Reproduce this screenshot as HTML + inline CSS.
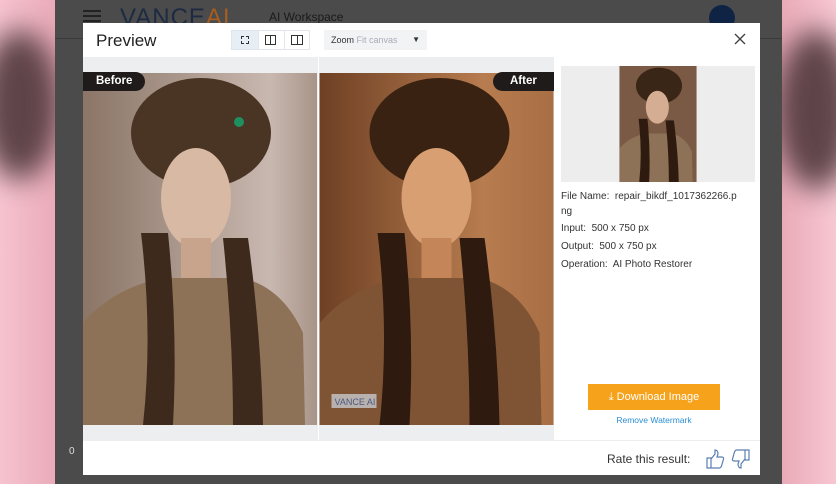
<!DOCTYPE html>
<html><head><meta charset="utf-8"><style>
*{margin:0;padding:0;box-sizing:border-box}
body{width:836px;height:484px;overflow:hidden;position:relative;font-family:"Liberation Sans",sans-serif;background:#f2b9c6}
.pinkL{position:absolute;left:0;top:0;width:60px;height:484px;background:linear-gradient(90deg,#f6c3cf,#e9a9b7)}
.pinkR{position:absolute;right:0;top:0;width:60px;height:484px;background:linear-gradient(90deg,#e8a7b5,#f7c7d2)}
.blobL{position:absolute;left:-20px;top:30px;width:80px;height:150px;border-radius:50%;background:#2e1d20;filter:blur(14px);opacity:.75}
.blobR{position:absolute;right:-20px;top:30px;width:80px;height:160px;border-radius:50%;background:#2e1d20;filter:blur(14px);opacity:.75}
.app{position:absolute;left:55px;top:0;width:727px;height:484px;background:#4b4b4b}
.modal{position:absolute;left:83px;top:23px;width:677px;height:452px;background:#fff}
.info div{position:absolute;left:0;white-space:nowrap}
</style></head><body>
<div class="pinkL"></div><div class="pinkR"></div><div class="blobL"></div><div class="blobR"></div>
<div class="app">
  <div style="position:absolute;left:28px;top:10px;width:18px;height:2px;background:#222;box-shadow:0 5px 0 #222,0 10px 0 #222"></div>
  <div style="position:absolute;left:65px;top:4px;font-size:24px;color:#1d2a44;letter-spacing:1px">VANCE<span style="color:#a55d20">AI</span></div>
  <div style="position:absolute;left:214px;top:10px;font-size:12px;color:#1a1a1a">AI Workspace</div>
  <div style="position:absolute;left:654px;top:5px;width:26px;height:26px;border-radius:50%;background:#0f2445"></div>
  <div style="position:absolute;left:0;top:38px;width:727px;height:1px;background:#3a3a3a"></div>
  <div style="position:absolute;left:14px;top:446px;font-size:10px;color:#ddd">0</div>
</div>
<div class="modal">
  <div style="position:absolute;left:13px;top:8px;font-size:17px;color:#222">Preview</div>
  <div style="position:absolute;left:148px;top:7px;width:79px;height:20px;border:1px solid #e2e6ea;background:#fff">
    <div style="position:absolute;left:0;top:0;width:26px;height:18px;background:#e6eef6"></div>
    <div style="position:absolute;left:26px;top:0;width:1px;height:18px;background:#e2e6ea"></div>
    <div style="position:absolute;left:52px;top:0;width:1px;height:18px;background:#e2e6ea"></div>
    <div style="position:absolute;left:9px;top:5px;width:8px;height:8px;border:1px dashed #333"></div>
    <div style="position:absolute;left:33px;top:4px;width:11px;height:10px;border:1px solid #333"></div>
    <div style="position:absolute;left:38px;top:4px;width:1px;height:10px;background:#333"></div>
    <div style="position:absolute;left:59px;top:4px;width:12px;height:10px;border:1px solid #333"></div>
    <div style="position:absolute;left:65px;top:4px;width:1px;height:10px;background:#333"></div>
  </div>
  <div style="position:absolute;left:241px;top:7px;width:103px;height:20px;background:#f1f3f5;font-size:9px;line-height:20px;padding-left:7px;color:#333">Zoom <span style="color:#aab">Fit canvas</span><span style="position:absolute;right:7px;top:0;font-size:8px">▼</span></div>
  <svg style="position:absolute;left:651px;top:10px" width="12" height="12" viewBox="0 0 12 12" stroke="#444" stroke-width="1.4"><path d="M1 1L11 11M11 1L1 11"/></svg>
  <div style="position:absolute;left:0;top:34px;width:471px;height:383px;background:#eceef0"></div>
  <div style="position:absolute;left:235px;top:34px;width:1px;height:383px;background:#fff"></div>
  <svg style="position:absolute;left:0;top:50px" width="234" height="352" viewBox="0 0 234 352">
    <defs><linearGradient id="bg1" x1="0" x2="1"><stop offset="0" stop-color="#8a7566"/><stop offset=".8" stop-color="#c9b8b0"/><stop offset="1" stop-color="#a89488"/></linearGradient></defs>
    <rect width="234" height="352" fill="url(#bg1)"/>
    <path d="M0 250 Q30 215 80 205 L160 205 Q200 215 220 260 L222 352 L0 352Z" fill="#8d7258"/>
    <ellipse cx="118" cy="60" rx="70" ry="55" fill="#4a3424"/>
    <ellipse cx="113" cy="125" rx="35" ry="50" fill="#d7b9a4"/>
    <rect x="98" y="165" width="30" height="40" fill="#c9a48c"/>
    <path d="M58 160 Q70 260 60 352 L90 352 Q95 260 85 160Z" fill="#3d2a1c"/>
    <path d="M140 165 Q150 260 150 352 L180 352 Q178 260 165 165Z" fill="#3d2a1c"/>
    <circle cx="156" cy="49" r="5" fill="#1e8f5e"/>
  </svg>
  <svg style="position:absolute;left:236px;top:50px" width="235" height="352" viewBox="0 0 234 352">
    <defs><linearGradient id="bg2" x1="0" x2="1"><stop offset="0" stop-color="#6e4024"/><stop offset=".7" stop-color="#b77c4f"/><stop offset="1" stop-color="#a86e44"/></linearGradient></defs>
    <rect width="234" height="352" fill="url(#bg2)"/>
    <path d="M0 250 Q30 215 80 205 L160 205 Q200 215 220 260 L222 352 L0 352Z" fill="#7e5434"/>
    <ellipse cx="120" cy="60" rx="70" ry="55" fill="#3a2212"/>
    <ellipse cx="117" cy="125" rx="35" ry="50" fill="#d89f72"/>
    <rect x="102" y="165" width="30" height="40" fill="#c48658"/>
    <path d="M58 160 Q70 260 60 352 L90 352 Q95 260 85 160Z" fill="#2e1a0e"/>
    <path d="M140 165 Q150 260 150 352 L180 352 Q178 260 165 165Z" fill="#2e1a0e"/>
    <rect x="12" y="321" width="45" height="14" fill="#c8c8cc" opacity=".8"/>
    <text x="15" y="332" font-size="9" font-family="Liberation Sans" fill="#4a5a80">VANCE AI</text>
  </svg>
  <div style="position:absolute;left:0;top:49px;width:62px;height:19px;background:#1f1b1a;border-radius:0 10px 10px 0;color:#fff;font-size:11.5px;font-weight:bold;line-height:19px;padding-left:13px">Before</div>
  <div style="position:absolute;left:410px;top:49px;width:61px;height:19px;background:#1f1b1a;border-radius:10px 0 0 10px;color:#fff;font-size:11.5px;font-weight:bold;line-height:19px;padding-left:17px">After</div>
  <div style="position:absolute;left:478px;top:43px;width:194px;height:116px;background:#ededee"></div>
  <svg style="position:absolute;left:536px;top:43px" width="78" height="116" viewBox="0 0 234 352">
    <rect width="234" height="352" fill="#7a5a44"/>
    <path d="M0 250 Q30 215 80 205 L160 205 Q200 215 220 260 L222 352 L0 352Z" fill="#8d7258"/>
    <ellipse cx="120" cy="60" rx="70" ry="55" fill="#3a2616"/>
    <ellipse cx="115" cy="125" rx="35" ry="50" fill="#d4ad92"/>
    <path d="M58 160 Q70 260 60 352 L90 352 Q95 260 85 160Z" fill="#2e1a0e"/>
    <path d="M140 165 Q150 260 150 352 L180 352 Q178 260 165 165Z" fill="#2e1a0e"/>
  </svg>
  <div class="info" style="position:absolute;left:478px;top:0;font-size:10px;color:#333">
    <div style="top:168px">File Name:&nbsp; repair_bikdf_1017362266.p</div>
    <div style="top:183px">ng</div>
    <div style="top:200px">Input:&nbsp; 500 x 750 px</div>
    <div style="top:218px">Output:&nbsp; 500 x 750 px</div>
    <div style="top:236px">Operation:&nbsp; AI Photo Restorer</div>
  </div>
  <div style="position:absolute;left:505px;top:361px;width:132px;height:26px;background:#f6a21b;color:#fff;font-size:11px;line-height:26px;text-align:center">⤓ Download Image</div>
  <div style="position:absolute;left:505px;top:392px;width:132px;text-align:center;font-size:8.5px;color:#2a8ed6">Remove Watermark</div>
  <div style="position:absolute;left:0;top:417px;width:677px;height:1px;background:#eee"></div>
  <div style="position:absolute;left:524px;top:429px;font-size:12px;color:#333">Rate this result:</div>
  <svg style="position:absolute;left:623px;top:426px" width="44" height="20" viewBox="0 0 44 20" fill="none" stroke="#5b7fb0" stroke-width="1.2">
    <path d="M1 9h4v10H1z M5 10l4-5V1c2 0 3 2 3 4l-1 3h5c1 0 2 1 1.5 2l-2 7c-.5 1-1 2-2 2H5"/>
    <path d="M43 11h-4V1h4z M39 10l-4 5v4c-2 0-3-2-3-4l1-3h-5c-1 0-2-1-1.5-2l2-7c.5-1 1-2 2-2H39"/>
  </svg>
</div>
</body></html>
